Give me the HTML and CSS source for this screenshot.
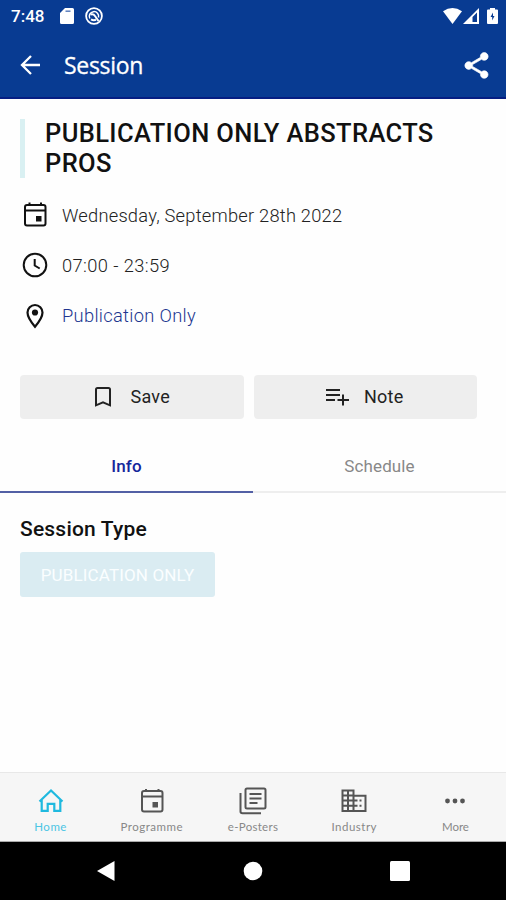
FILE: index.html
```html
<!DOCTYPE html>
<html lang="en">
<head>
<meta charset="utf-8">
<title>Session</title>
<link rel="stylesheet" href="styles.css">
</head>
<body>
<div class="app">
  <header class="header">
    <div class="status">
      <span class="time">7:48</span>
      <svg class="sd" width="14" height="16" viewBox="0 0 14 16"><path fill="currentColor" d="M5 0h7.500A1.500 1.500 0 0 1 14 1.500v13a1.500 1.500 0 0 1-1.500 1.500h-11A1.500 1.500 0 0 1 0 14.500V5z"/><path d="M5.500 3.200h5" stroke="#5c7fbd" stroke-width="1.500"/></svg>
      <svg class="sync" width="18" height="18" viewBox="0 0 18 18" fill="none" stroke="currentColor"><circle cx="9" cy="9" r="7.900" stroke-width="1.800"/><path d="M4.800 11.500A4.700 4.700 0 1 1 13.500 10.500" stroke-width="1.500"/><path d="M5.500 7.500q3-1 4.500 1.500l3.500 5M6 12.300q2.500 1.500 5 .5" stroke-width="2"/></svg>
      <span class="signals">
        <svg width="19" height="16" viewBox="0 0 19 16"><path fill="currentColor" d="M0 3.300Q9.500-3.300 19 3.300L9.500 16z"/></svg>
        <svg width="16" height="16" viewBox="0 0 16 16"><path fill="currentColor" fill-rule="evenodd" d="M0 16L16 0v16zM9.500 9V14h4.500V4.500z"/></svg>
        <svg class="battery" width="11" height="16" viewBox="0 0 11 16"><path fill="currentColor" d="M3 0h5v1.500h2q1 0 1 1V15q0 1-1 1H1q-1 0-1-1V2.500q0-1 1-1h2z"/><path fill="#083b92" d="M6 4.500L3.500 9h1.700v3.500L7.500 8H6z"/></svg>
      </span>
    </div>
    <div class="bar">
      <svg class="back" width="20" height="20" viewBox="0 0 20 20" fill="none" stroke="currentColor" stroke-width="2.300"><path d="M20 10H2M11 1L2 10l9 9"/></svg>
      <span class="bar-title">Session</span>
      <svg class="share" width="31" height="31" viewBox="0 0 24 24"><path fill="currentColor" stroke="currentColor" stroke-width=".5" d="M18 16.080c-.76 0-1.440.3-1.960.77L8.910 12.700c.05-.23.09-.46.09-.7s-.04-.47-.09-.7l7.050-4.110c.54.5 1.250.81 2.040.81 1.660 0 3-1.340 3-3s-1.340-3-3-3-3 1.340-3 3c0 .24.040.47.090.7L8.040 9.810C7.500 9.310 6.790 9 6 9c-1.660 0-3 1.340-3 3s1.340 3 3 3c.79 0 1.500-.31 2.040-.81l7.120 4.160c-.05.21-.08.430-.08.650 0 1.610 1.310 2.920 2.920 2.920s2.920-1.310 2.920-2.920-1.310-2.920-2.920-2.920z"/></svg>
    </div>
  </header>

  <main class="main">
    <h1 class="title">PUBLICATION ONLY ABSTRACTS<br>PROS</h1>
    <ul class="details">
      <li>
        <svg class="icon" viewBox="0 0 30 30" fill="none" stroke="currentColor" stroke-width="2"><rect x="5" y="5" width="20.500" height="20.500" rx="2"/><path d="M5 10.500h20.500M9.500 2.500V6M21 2.500V6"/><path d="M16 16h5.500v5.500H16z" fill="currentColor" stroke="none"/></svg>
        <span class="date">Wednesday, September 28th 2022</span>
      </li>
      <li>
        <svg class="icon" viewBox="0 0 30 30" fill="none" stroke="currentColor" stroke-width="2"><circle cx="15" cy="15" r="11.300"/><path d="M14.700 9v6.500l5 3"/></svg>
        <span class="hours">07:00 - 23:59</span>
      </li>
      <li>
        <svg class="icon" viewBox="0 0 30 30" fill="none" stroke="currentColor" stroke-width="2.200"><path d="M15 25.800C11 21 7.500 16 7.500 11.500a7.500 7.500 0 0 1 15 0c0 4.500-3.500 9.500-7.500 14.300z"/><circle cx="15" cy="11.500" r="3.100" fill="currentColor" stroke="none"/></svg>
        <a class="place">Publication Only</a>
      </li>
    </ul>
    <div class="actions">
      <div class="button save">
        <svg width="16" height="20" viewBox="0 0 16 20" fill="none" stroke="currentColor" stroke-width="2"><path d="M1 18.300V2.500Q1 1 2.500 1h11Q15 1 15 2.500v15.800l-7-3z"/></svg>
        <span>Save</span>
      </div>
      <div class="button note">
        <svg width="24" height="18" viewBox="0 0 24 18" fill="none" stroke="currentColor" stroke-width="2"><path d="M1 2h14M1 7h14M1 12h9M12.500 12H24M18 6.500v11"/></svg>
        <span>Note</span>
      </div>
    </div>
  </main>

  <nav class="tabs">
    <div class="tab active">Info</div>
    <div class="tab">Schedule</div>
  </nav>

  <section class="type">
    <h2>Session Type</h2>
    <span class="chip">PUBLICATION ONLY</span>
  </section>

  <nav class="bottom">
    <div class="item current">
      <svg width="30" height="30" viewBox="0 0 30 30" fill="none" stroke="currentColor" stroke-width="2.200"><path d="M3.500 15.500L15 4.500l11.500 11M5.700 13.500v11.300h6v-7h6.600v7h6V13.500"/></svg>
      <span>Home</span>
    </div>
    <div class="item programme">
      <svg width="30" height="30" viewBox="0 0 30 30" fill="none" stroke="currentColor" stroke-width="2"><rect x="5" y="5" width="20.500" height="20.500" rx="2"/><path d="M5 10.500h20.500M9 3V6M21.500 3V6"/><path d="M15.500 16H21v5.500h-5.500z" fill="currentColor" stroke="none"/></svg>
      <span>Programme</span>
    </div>
    <div class="item posters">
      <svg width="30" height="30" viewBox="0 0 30 30" fill="none" stroke="currentColor" stroke-width="2"><rect x="7.500" y="2.500" width="20" height="20" rx="1.500"/><path d="M2.500 7v18.500Q2.500 27.300 4.500 27.300H23M11.500 8h12M11.500 12.500h12M11.500 17h8"/></svg>
      <span>e-Posters</span>
    </div>
    <div class="item industry">
      <svg width="30" height="30" viewBox="0 0 30 30" fill="none" stroke="currentColor" stroke-width="2"><path d="M3.500 4.500h11V25h-11zM9 4.500V25M3.500 9.500h11M3.500 14.500h11M3.500 19.700h11M14.500 9.700h12V25h-12M14.500 14.500h4M14.500 19.700h4"/><path d="M20.500 13.500h2v2h-2zM20.500 18.700h2v2h-2z" fill="currentColor" stroke="none"/></svg>
      <span>Industry</span>
    </div>
    <div class="item more">
      <svg width="30" height="30" viewBox="0 0 30 30" fill="currentColor"><circle cx="7.500" cy="15" r="2.400"/><circle cx="15" cy="15" r="2.400"/><circle cx="22.500" cy="15" r="2.400"/></svg>
      <span>More</span>
    </div>
  </nav>

  <footer class="system">
    <svg width="20" height="22" viewBox="0 0 20 22" fill="currentColor"><path d="M18.500 1v20L1 11z"/></svg>
    <svg width="20" height="20" viewBox="0 0 20 20" fill="currentColor"><circle cx="10" cy="10" r="9.300"/></svg>
    <svg width="20" height="20" viewBox="0 0 20 20" fill="currentColor"><rect width="20" height="20" rx="1.500"/></svg>
  </footer>
</div>
</body>
</html>
```
FILE: styles.css
```css
* { box-sizing: border-box; }
body { margin: 0; font-family: Roboto, "Liberation Sans", sans-serif; background: #fefefe; color: #111; }
svg { display: block; flex: none; }
h1, h2, ul { margin: 0; padding: 0; }
.app { width: 506px; height: 900px; display: flex; flex-direction: column; overflow: hidden; }

.header { height: 99px; background: #083b92; color: #fff; border-bottom: 2px solid #061e83; flex: none; }
.status { height: 32px; display: flex; align-items: center; padding: 0 8px 0 11px; }
.time { font-size: 17px; font-weight: 500; width: 49px; }
.sync { margin-left: 11px; }
.signals { margin-left: auto; display: flex; gap: 1px; }
.battery { margin-left: 7px; }
.bar { height: 66px; display: flex; align-items: center; padding: 0 14px 0 20px; }
.bar-title { margin-left: 24px; font-family: "Open Sans", "Noto Sans", sans-serif; font-size: 23px; letter-spacing: -0.3px; -webkit-text-stroke: 0.3px currentColor; }
.share { margin-left: auto; }

.main { padding: 20px 29px 0 20px; height: 321px; flex: none; }
.title { border-left: 5px solid #d9f0f2; padding-left: 20px; font-size: 25.5px; line-height: 29.5px; font-weight: 500; white-space: nowrap; letter-spacing: 0.38px; }
.details { list-style: none; margin-top: 12px; }
.details li { height: 50.3px; display: flex; align-items: center; font-size: 18.3px; letter-spacing: 0.23px; font-weight: 300; color: #222; }
.icon { width: 30px; height: 30px; color: #111; margin-right: 12px; }
.hours { letter-spacing: 0.4px; }
.place { color: #20358f; letter-spacing: 0.32px; }
.actions { display: flex; gap: 10px; margin-top: 34px; }
.button { flex: 1; height: 44px; border-radius: 4px; background: #eee; display: flex; align-items: center; justify-content: center; font-size: 18px; letter-spacing: 0.3px; color: #222; }
.save { gap: 19px; padding-left: 2px; }
.note { gap: 15px; padding-right: 2px; }

.tabs { display: flex; height: 73px; flex: none; }
.tab { flex: 1; border-bottom: 2px solid #eee; text-align: center; font-size: 17px; letter-spacing: 0.1px; color: #888; padding-top: 36px; line-height: 20px; }
.active { color: #14279b; font-weight: 500; border-color: #5360a5; }

.type { padding: 24px 20px 0; flex: 1; }
.type h2 { font-size: 21px; font-weight: 500; line-height: 25px; letter-spacing: 0.2px; }
.chip { display: flex; align-items: center; justify-content: center; margin-top: 10px; width: 195px; height: 45px; background: #daecf2; color: #fafeff; border-radius: 3px; font-size: 17px; letter-spacing: 0.15px; }

.bottom { height: 70px; flex: none; display: flex; background: #f6f6f6; border-top: 1px solid #e8e8e8; border-bottom: 1px solid #aaa; color: #555; }
.item { flex: 1; display: flex; flex-direction: column; align-items: center; padding-top: 13px; font-family: Lato, sans-serif; font-size: 11.5px; line-height: 14px; }
.item span { margin-top: 4px; color: #888; }
.programme span, .industry span { letter-spacing: 0.5px; }
.posters span { letter-spacing: 0.3px; }
.current { color: #1fb9df; }
.current span { color: #4cc5e4; letter-spacing: 0.5px; }

.system { height: 58px; flex: none; background: #000; color: #fff; display: flex; justify-content: space-between; align-items: center; padding: 0 96px; }
```
